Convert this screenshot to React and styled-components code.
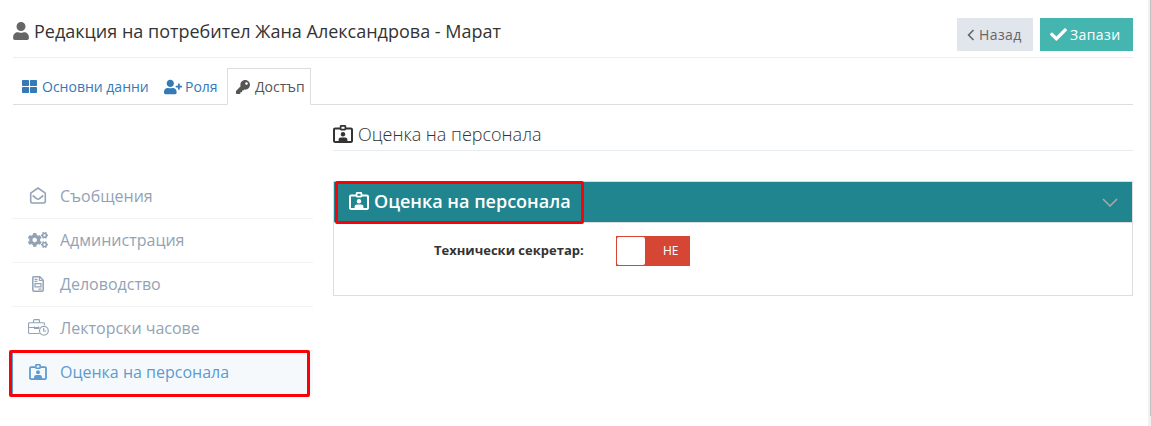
import { useState } from "react";
import { styled, createGlobalStyle } from "styled-components";
import { FaUser, FaThLarge, FaUserPlus, FaKey, FaCheck, FaCogs } from "react-icons/fa";

const BadgeIcon = ({ width = 20, height = 18 }) => (
  <svg width={width} height={height} viewBox="0 0 20 18" fill="none">
    <path d="M7 3.4H2.2A1.2 1.2 0 0 0 1 4.600v11A1.200 1.200 0 0 0 2.200 17h15.600a1.200 1.200 0 0 0 1.200-1.400v-11a1.200 1.200 0 0 0-1.200-1.200H13" stroke="currentColor" strokeWidth="2" />
    <rect x="7.600" y="0.900" width="4.800" height="3.800" rx="0.600" stroke="currentColor" strokeWidth="1.700" />
    <circle cx="10" cy="9.300" r="2.200" fill="currentColor" />
    <path d="M5.600 17v-2.200c0-1.400 1-2.300 2.400-2.300h4c1.400 0 2.400.9 2.400 2.300V17z" fill="currentColor" />
  </svg>
);

const MailOpenIcon = () => (
  <svg width="18" height="17" viewBox="0 0 18 17" fill="none" stroke="currentColor" strokeWidth="1.600">
    <path d="M1.700 6.200 9 1l7.300 5.200v8.300a1.500 1.500 0 0 1-1.500 1.500H3.200a1.500 1.500 0 0 1-1.500-1.500z" />
    <path d="m3.700 8.500 3.900 3.100q1.400 1 2.800 0l3.900-3.100" />
  </svg>
);

const InvoiceIcon = () => (
  <svg width="12" height="16" viewBox="0 0 12 16" fill="none" stroke="currentColor" strokeWidth="1.500">
    <path d="M1.700.8h6.100l3.400 3.400v9.900a1.100 1.100 0 0 1-1.100 1.100H1.900A1.100 1.100 0 0 1 .8 14.100V1.700a.9.900 0 0 1 .9-.9z" />
    <path d="M7.500.7v3.800h3.700M2.500 3.300h3M2.500 5.400h3M6.500 13.200h3" strokeWidth="1.200" />
    <path d="M3 7.600h6v3.200H3z" strokeWidth="1.200" />
  </svg>
);

const BriefcaseClockIcon = () => (
  <svg width="21" height="17" viewBox="0 0 21 17" fill="none" stroke="currentColor" strokeWidth="1.150">
    <path d="M11.500 14.500h-10a1 1 0 0 1-1-1V4.700a1 1 0 0 1 1-1h14a1 1 0 0 1 1 1v1.600M5.500 3.700V1.500a.9.900 0 0 1 .9-.9h4.200a.9.900 0 0 1 .9.900v2.200M.5 8.500h11M6.500 7.500v2h4v-2" />
    <circle cx="15.900" cy="11.800" r="4.400" />
    <path d="M15.700 9v3h2.500" />
  </svg>
);

const BackIcon = () => (
  <svg width="8" height="12" viewBox="0 0 8 12" fill="none" stroke="currentColor" strokeWidth="1.600">
    <path d="M6.500 1 1.600 6l4.900 5" />
  </svg>
);

const ChevronDown = () => (
  <svg width="16" height="9" viewBox="0 0 16 9" fill="none" stroke="currentColor" strokeWidth="1.500">
    <path d="m1 1 7 7 7-7" />
  </svg>
);

const tabs = [
  { label: "Основни данни", icon: <FaThLarge size={15} />, gap: 5, width: 142 },
  { label: "Роля", icon: <FaUserPlus size={18} />, gap: 3, width: 72 },
  { label: "Достъп", icon: <FaKey size={14} />, gap: 5, width: 84 },
];

const menu = [
  { label: "Съобщения", icon: <MailOpenIcon /> },
  { label: "Администрация", icon: <FaCogs size={20} /> },
  { label: "Деловодство", icon: <InvoiceIcon /> },
  { label: "Лекторски часове", icon: <BriefcaseClockIcon /> },
  { label: "Оценка на персонала", icon: <BadgeIcon width={18} height={16} /> },
];

const App = () => {
  const [tab, setTab] = useState(2);
  const [item, setItem] = useState(4);
  const [on, setOn] = useState(false);

  return (
    <>
      <GlobalStyle />
      <Window>
        <Page>
          <Header>
            <Title>
              <FaUser size={18} />
              <span>Редакция на потребител Жана Александрова - Марат</span>
            </Title>
            <Actions>
              <Button $width={76}>
                <BackIcon />
                <span>Назад</span>
              </Button>
              <Button $width={93} $primary>
                <FaCheck size={17} />
                <span>Запази</span>
              </Button>
            </Actions>
          </Header>
          <Tabs>
            {tabs.map((t, i) => (
              <Tab key={t.label} $active={i === tab} $gap={t.gap} $width={t.width} onClick={() => setTab(i)}>
                {t.icon}
                <span>{t.label}</span>
              </Tab>
            ))}
          </Tabs>
          <Content>
            <Sidebar>
              {menu.map((m, i) => (
                <MenuItem key={m.label} $active={i === item} onClick={() => setItem(i)}>
                  <MenuIcon>{m.icon}</MenuIcon>
                  <span>{m.label}</span>
                  {i === 4 && <Marker $top={-1} $left={-4} $width={301} $height={47} />}
                </MenuItem>
              ))}
            </Sidebar>
            <Main>
              <SectionTitle>
                <BadgeIcon />
                <span>Оценка на персонала</span>
              </SectionTitle>
              <Panel>
                <PanelHead>
                  <PanelTitle>
                    <BadgeIcon />
                    <span>Оценка на персонала</span>
                  </PanelTitle>
                  <ChevronDown />
                  <Marker $top={-1} $left={1} $width={249} $height={43} />
                </PanelHead>
                <PanelBody>
                  <Label>Технически секретар:</Label>
                  <Switch $on={on} onClick={() => setOn(!on)}>
                    <Knob />
                    <SwitchText>{on ? "ДА" : "НЕ"}</SwitchText>
                  </Switch>
                </PanelBody>
              </Panel>
            </Main>
          </Content>
        </Page>
        <Scrollbar>
          <Thumb />
        </Scrollbar>
      </Window>
    </>
  );
};

export default App;

const GlobalStyle = createGlobalStyle`
  * {
    box-sizing: border-box;
  }
  body {
    margin: 0;
    overflow: hidden;
    background: #fff;
    color: #333;
    font-family: "Open Sans", sans-serif;
  }
  svg {
    flex: none;
  }
`;

const Window = styled.div`
  display: flex;
  width: 1151px;
  height: 426px;
`;

const Page = styled.div`
  flex: 1;
  padding: 0 15px 0 13px;
`;

const Header = styled.header`
  display: flex;
  justify-content: space-between;
  height: 58px;
  border-bottom: 1px solid #eee;
`;

const Title = styled.h1`
  display: flex;
  align-items: center;
  gap: 4px;
  height: 26px;
  margin: 18px 0 0 -1px;
  font-size: 18px;
  font-weight: 400;
  white-space: nowrap;

  svg {
    color: #666;
  }
`;

const Actions = styled.div`
  display: flex;
  gap: 7px;
  padding-top: 18px;
`;

const Button = styled.button`
  display: flex;
  align-items: center;
  gap: ${(props) => (props.$primary ? 3 : 4)}px;
  width: ${(props) => props.$width}px;
  height: 33px;
  padding: 0 0 0 10px;
  border: none;
  background: ${(props) => (props.$primary ? "#45b6af" : "#e1e5ec")};
  color: ${(props) => (props.$primary ? "#fff" : "#666")};
  font-family: inherit;
  font-size: 14px;
  letter-spacing: 0.4px;
`;

const Tabs = styled.nav`
  display: flex;
  height: 47px;
  padding-top: 10px;
  border-bottom: 1px solid #ddd;
`;

const Tab = styled.div`
  display: flex;
  align-items: center;
  gap: ${(props) => props.$gap}px;
  width: ${(props) => props.$width}px;
  height: 37px;
  padding-left: 8px;
  border: 1px solid ${(props) => (props.$active ? "#ddd" : "transparent")};
  border-bottom-color: ${(props) => (props.$active ? "#fff" : "transparent")};
  color: ${(props) => (props.$active ? "#555" : "#337ab7")};
  font-size: 14px;
  white-space: nowrap;
`;

const Content = styled.div`
  display: flex;
  gap: 20px;
`;

const Sidebar = styled.aside`
  width: 300px;
  padding-top: 70px;
`;

const MenuItem = styled.div`
  position: relative;
  display: flex;
  align-items: center;
  height: 44px;
  margin-left: -2px;
  padding: 0 0 2px 13px;
  border-left: 2px solid ${(props) => (props.$active ? "#5b9bd1" : "transparent")};
  border-bottom: 1px solid ${(props) => (props.$active ? "transparent" : "#f0f4f7")};
  background: ${(props) => (props.$active ? "#f6f9fb" : "#fff")};
  background-clip: padding-box;
  color: ${(props) => (props.$active ? "#5b9bd1" : "#93a3b5")};
  font-size: 16px;
`;

const MenuIcon = styled.span`
  display: flex;
  justify-content: center;
  width: 24px;
  margin-right: 10px;
`;

const Main = styled.main`
  flex: 1;
  padding-top: 16px;
`;

const SectionTitle = styled.h3`
  display: flex;
  align-items: center;
  gap: 5px;
  height: 30px;
  margin: 0 0 30px;
  padding-bottom: 4px;
  border-bottom: 1px solid #e7ecf1;
  font-size: 18px;
  font-weight: 300;
`;

const Panel = styled.section`
  height: 115px;
  border: 1px solid #ddd;
`;

const PanelHead = styled.div`
  position: relative;
  display: flex;
  align-items: center;
  justify-content: space-between;
  height: 41px;
  padding: 0 14px 0 15px;
  border-bottom: 1px solid #ddd;
  background: #20858f;
  background-clip: padding-box;
  color: #aaa;
`;

const PanelTitle = styled.div`
  display: flex;
  align-items: center;
  gap: 5px;
  padding-bottom: 2px;
  color: #fff;
  font-size: 18px;
  font-weight: 600;
`;

const PanelBody = styled.div`
  display: flex;
  align-items: flex-start;
  padding: 13px 0 0 100px;
`;

const Label = styled.label`
  width: 182px;
  font-size: 13px;
  font-weight: 700;
  line-height: 29px;
  white-space: nowrap;
`;

const Switch = styled.div`
  display: flex;
  width: 74px;
  height: 30px;
  padding: 1px;
  background: ${(props) => (props.$on ? "#45b6af" : "#d64635")};
`;

const Knob = styled.span`
  width: 28px;
  height: 28px;
  border-radius: 2px;
  background: #fff;
`;

const SwitchText = styled.span`
  padding-left: 18px;
  color: #fff;
  font-size: 12px;
  line-height: 28px;
`;

const Marker = styled.span`
  position: absolute;
  top: ${(props) => props.$top}px;
  left: ${(props) => props.$left}px;
  width: ${(props) => props.$width}px;
  height: ${(props) => props.$height}px;
  border: 3px solid #fb0007;
  border-radius: 2px;
  pointer-events: none;
`;

const Scrollbar = styled.div`
  width: 3px;
  padding-left: 2px;
  background: #f1f1f1;
`;

const Thumb = styled.div`
  height: 416px;
  background: #c1c1c1;
`;
